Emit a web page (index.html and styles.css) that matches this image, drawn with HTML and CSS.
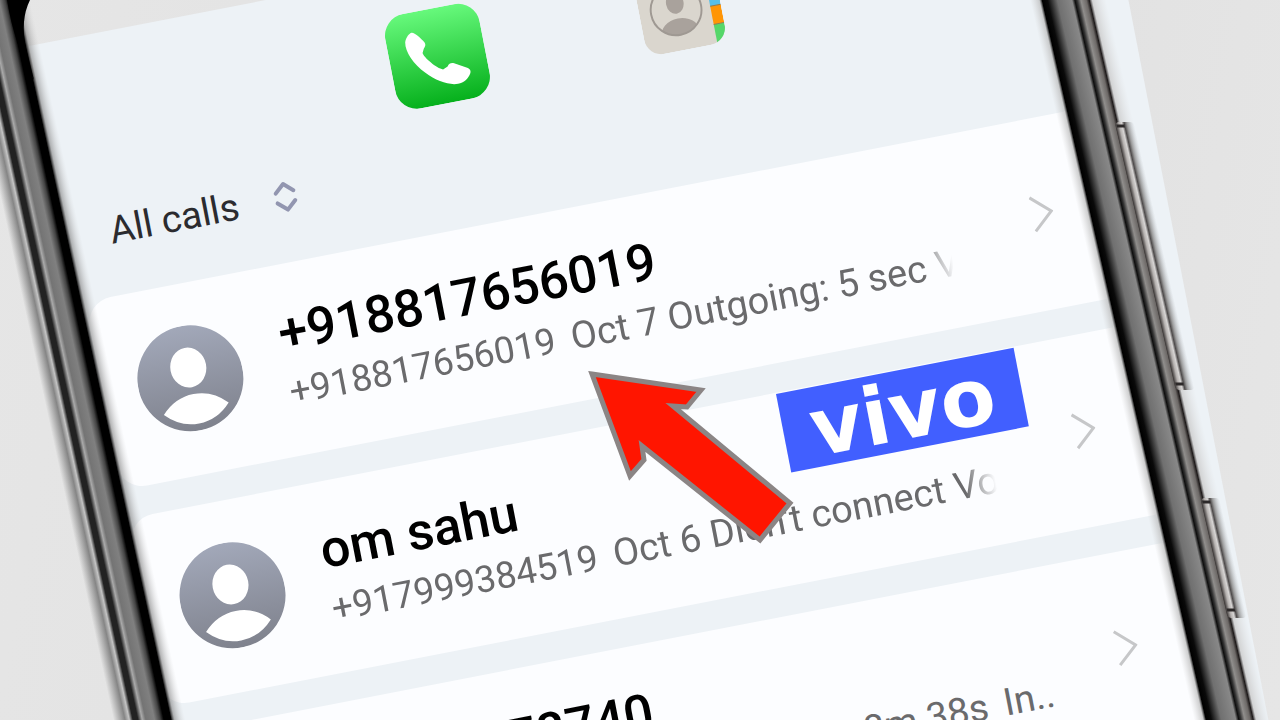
FILE: index.html
```
<!DOCTYPE html>
<html lang="en">
<head>
    <meta charset="utf-8">
    <title>All calls</title>
    <link rel="stylesheet" href="styles.css">
</head>
<body>
    <div class="stage">
        <main class="screen">
            <nav class="apps">
                <a href="#phone" aria-label="Phone">
                    <svg class="app-phone" viewBox="0 0 96 96">
                        <defs>
                            <linearGradient id="green" x1="0" y1="0" x2="0" y2="1">
                                <stop offset="0" stop-color="#67f97c"/>
                                <stop offset="1" stop-color="#06b01c"/>
                            </linearGradient>
                        </defs>
                        <rect width="96" height="96" rx="22" fill="url(#green)"/>
                        <path d="M19 28C21 23 25 20 27 20C30 20 35 27 38 32C39 34 38 36 36 38L34 42C34 46 45 60 51 62L56 60C58 57 60 57 63 58L75 65C78 67 78 69 77 71C74 76 69 79 63 79C54 79 42 72 33 62C23 51 17 38 19 28Z" fill="#fff"/>
                    </svg>
                </a>
                <a href="#contacts" aria-label="Contacts">
                    <svg class="app-contacts" viewBox="0 0 84 84">
                        <defs>
                            <clipPath id="tile"><rect width="84" height="84" rx="18"/></clipPath>
                            <clipPath id="disc"><circle cx="38" cy="42" r="26"/></clipPath>
                        </defs>
                        <g clip-path="url(#tile)">
                            <rect width="84" height="84" fill="#dad6ce"/>
                            <rect x="73" width="11" height="26" fill="#b9b4ac"/>
                            <rect x="73" y="26" width="11" height="19" fill="#57bfe8"/>
                            <rect x="73" y="45" width="11" height="19" fill="#ff9505"/>
                            <rect x="73" y="64" width="11" height="20" fill="#55d769"/>
                            <path d="M73 45H84M73 64H84" stroke="#8a7a55"/>
                        </g>
                        <g clip-path="url(#disc)" fill="#a9a29c">
                            <ellipse cx="38" cy="35" rx="9" ry="11"/>
                            <ellipse cx="38" cy="67" rx="20" ry="16"/>
                        </g>
                        <circle cx="38" cy="42" r="26" fill="none" stroke="#9f9993" stroke-width="2"/>
                    </svg>
                </a>
            </nav>

            <button class="filter" type="button">
                All calls
                <svg class="sort" viewBox="0 0 24 32">
                    <path d="M3 11L12 3L21 11M3 21L12 29L21 21"/>
                </svg>
            </button>

            <ul class="calls">
                <li>
                    <a class="call" href="#call-1">
                        <svg class="avatar" viewBox="0 0 106 106">
                            <defs>
                                <linearGradient id="slate" x1="0" y1="0" x2="0" y2="1">
                                    <stop offset="0" stop-color="#a2a8b9"/>
                                    <stop offset="1" stop-color="#7f828d"/>
                                </linearGradient>
                            </defs>
                            <circle cx="53" cy="53" r="53" fill="url(#slate)"/>
                            <ellipse cx="53" cy="42" rx="18" ry="20" fill="#fff"/>
                            <path d="M20 84Q34 69 53 69Q72 69 86 84Q72 99 53 99Q34 99 20 84Z" fill="#fff"/>
                        </svg>
                        <div class="info">
                            <div class="name">+918817656019</div>
                            <div class="detail faded"><span>+918817656019</span><span>Oct 7 Outgoing: 5 sec V</span></div>
                        </div>
                        <svg class="chevron" viewBox="0 0 22 38"><path d="M1 2L20 19L1 36"/></svg>
                    </a>
                </li>
                <li>
                    <a class="call" href="#call-2">
                        <svg class="avatar" viewBox="0 0 106 106">
                            <circle cx="53" cy="53" r="53" fill="url(#slate)"/>
                            <ellipse cx="53" cy="42" rx="18" ry="20" fill="#fff"/>
                            <path d="M20 84Q34 69 53 69Q72 69 86 84Q72 99 53 99Q34 99 20 84Z" fill="#fff"/>
                        </svg>
                        <div class="info">
                            <div class="name">om sahu</div>
                            <div class="detail faded"><span>+917999384519</span><span>Oct 6 Didn't connect Vo</span></div>
                        </div>
                        <svg class="chevron" viewBox="0 0 22 38"><path d="M1 2L20 19L1 36"/></svg>
                    </a>
                </li>
                <li>
                    <a class="call" href="#call-3">
                        <svg class="avatar" viewBox="0 0 106 106">
                            <circle cx="53" cy="53" r="53" fill="url(#slate)"/>
                            <ellipse cx="53" cy="42" rx="18" ry="20" fill="#fff"/>
                            <path d="M20 84Q34 69 53 69Q72 69 86 84Q72 99 53 99Q34 99 20 84Z" fill="#fff"/>
                        </svg>
                        <div class="info">
                            <div class="name">9770278740</div>
                            <div class="detail"><span>9770278740</span><span>Oct 6 Incoming: 8m 38s</span><span>In..</span></div>
                        </div>
                        <svg class="chevron" viewBox="0 0 22 38"><path d="M1 2L20 19L1 36"/></svg>
                    </a>
                </li>
            </ul>
        </main>

        <!-- phone body, side keys and pointer arrow -->
        <svg class="frame" viewBox="0 0 1280 720" preserveAspectRatio="xMidYMin slice">
            <defs>
                <linearGradient id="left-rail" gradientUnits="userSpaceOnUse" x1="-42" y1="0" x2="30" y2="0">
                    <stop offset="0" stop-color="#888" stop-opacity="0"/>
                    <stop offset=".16" stop-color="#858585"/>
                    <stop offset=".22" stop-color="#c4c4c4"/>
                    <stop offset=".27" stop-color="#222"/>
                    <stop offset=".34" stop-color="#222"/>
                    <stop offset=".4" stop-color="#aaa"/>
                    <stop offset=".45" stop-color="#747474"/>
                    <stop offset=".57" stop-color="#808080"/>
                    <stop offset=".65" stop-color="#444"/>
                    <stop offset=".7" stop-color="#000"/>
                    <stop offset=".8" stop-color="#000"/>
                    <stop offset=".85" stop-color="#888" stop-opacity=".6"/>
                    <stop offset="1" stop-color="#ccc" stop-opacity="0"/>
                </linearGradient>
                <linearGradient id="right-rail" gradientUnits="userSpaceOnUse" x1="1030" y1="0" x2="1106" y2="0">
                    <stop offset="0" stop-color="#ccc" stop-opacity="0"/>
                    <stop offset=".12" stop-color="#bbb" stop-opacity=".7"/>
                    <stop offset=".16" stop-color="#000"/>
                    <stop offset=".23" stop-color="#0a0a0a"/>
                    <stop offset=".36" stop-color="#707070"/>
                    <stop offset=".55" stop-color="#888"/>
                    <stop offset=".59" stop-color="#0d0d0d"/>
                    <stop offset=".62" stop-color="#333"/>
                    <stop offset=".67" stop-color="#908e8c"/>
                    <stop offset=".74" stop-color="#6d6967"/>
                    <stop offset=".78" stop-color="#1c1818"/>
                    <stop offset=".82" stop-color="#ccc" stop-opacity=".8"/>
                    <stop offset="1" stop-color="#ddd" stop-opacity="0"/>
                </linearGradient>
                <linearGradient id="key" gradientUnits="userSpaceOnUse" x1="1087" y1="0" x2="1106" y2="0">
                    <stop offset="0" stop-color="#3a3635"/>
                    <stop offset=".2" stop-color="#b5b1af"/>
                    <stop offset=".35" stop-color="#d8d6d5"/>
                    <stop offset=".48" stop-color="#4d4a4a"/>
                    <stop offset=".62" stop-color="#999"/>
                    <stop offset="1" stop-color="#cdd3d8" stop-opacity="0"/>
                </linearGradient>
            </defs>
            <g transform="matrix(1 0 .216 1 0 0)">
                <rect x="-42" width="72" height="720" fill="url(#left-rail)"/>
            </g>
            <path d="M7 0H30Q20 20 26 48L34 80Q14 44 7 0Z" fill="#000"/>
            <g transform="matrix(1 0 .2278 1 0 0)">
                <rect x="1030" width="76" height="720" fill="url(#right-rail)"/>
                <rect x="1087" y="122" width="19" height="268" rx="4" fill="url(#key)"/>
                <rect x="1087" y="498" width="19" height="120" rx="4" fill="url(#key)"/>
                <path d="M1088 126H1096M1088 384H1096M1088 502H1096M1088 610H1096" stroke="#2c2929" stroke-width="3"/>
            </g>
            <path class="arrow" d="M592 374L701 390L687 407L673 406L790 503L760 540L642 446L644 460L630 476Z"/>
        </svg>

        <div class="brand">vivo</div>
    </div>
</body>
</html>
```
FILE: styles.css
```
:root {
    --tilt: -11deg;
    --screen-bg: #edf2f6;
    --card-bg: #fcfdff;
    --text-color: #2b2b2f;
    --muted: #6a6a6c;
    --brand: #415fff;
}

body {
    margin: 0;
    font-family: Roboto, 'Liberation Sans', sans-serif;
    color: var(--text-color);
    background-color: #e3e3e3;
}

a {
    color: inherit;
    text-decoration: none;
}

.stage {
    position: relative;
    box-sizing: border-box;
    height: 100vh;
    padding: 46px 0 0 29px;
    overflow: hidden;
    background: linear-gradient(100deg, #e6e6e6, #dfdfdf 60%, #e6e6e6);
}

.screen {
    width: 87%;
    transform: rotate(var(--tilt));
    transform-origin: top left;
    background-color: var(--screen-bg);
}

.apps {
    display: flex;
    align-items: center;
    gap: 158px;
    padding: 40px 0 0 351px;
}

.apps svg {
    display: block;
}

.app-phone {
    width: 96px;
    height: 96px;
}

.app-contacts {
    width: 82px;
    height: 82px;
}

.filter {
    display: flex;
    align-items: center;
    gap: 36px;
    margin: 38px 0 42px 44px;
    padding: 0;
    border: none;
    background: none;
    color: inherit;
    font-family: inherit;
    font-size: 38px;
    line-height: 46px;
    cursor: pointer;
}

.sort {
    width: 24px;
    height: 32px;
    fill: none;
    stroke: #9296b0;
    stroke-width: 4;
    stroke-linecap: round;
    stroke-linejoin: round;
}

.calls {
    display: flex;
    flex-direction: column;
    gap: 29px;
    margin: 0 47px 0 6px;
    padding: 0 0 29px;
    list-style: none;
}

.call {
    display: flex;
    align-items: center;
    padding: 36px 67px 39px 36px;
    border-radius: 26px;
    background-color: var(--card-bg);
}

.avatar {
    flex: none;
    width: 106px;
    height: 106px;
    margin-right: 42px;
}

.info {
    flex: 1;
    min-width: 0;
    white-space: nowrap;
}

.name {
    color: #000;
    font-size: 52px;
    font-weight: 500;
    line-height: 66px;
}

.detail {
    display: flex;
    align-items: baseline;
    gap: 16px;
    color: var(--muted);
    font-size: 37px;
    line-height: 50px;
}

.detail span + span {
    font-size: 38px;
}

.faded {
    overflow: hidden;
    -webkit-mask-image: linear-gradient(to left, transparent, #000 32px);
    mask-image: linear-gradient(to left, transparent, #000 32px);
}

.chevron {
    flex: none;
    width: 22px;
    height: 38px;
    margin-left: 86px;
    fill: none;
    stroke: #c6c7c9;
    stroke-width: 3;
}

.frame {
    position: absolute;
    top: 0;
    left: 0;
    width: 100%;
    height: 100%;
    pointer-events: none;
}

.arrow {
    fill: #ff1500;
    stroke: #8b8585;
    stroke-width: 5;
}

.brand {
    position: absolute;
    top: 394px;
    left: 776px;
    width: 242px;
    height: 80px;
    transform: rotate(var(--tilt));
    transform-origin: top left;
    background-color: var(--brand);
    color: #fff;
    font-family: 'DejaVu Sans', sans-serif;
    font-size: 80px;
    font-weight: 700;
    line-height: 84px;
    text-align: center;
}
```
